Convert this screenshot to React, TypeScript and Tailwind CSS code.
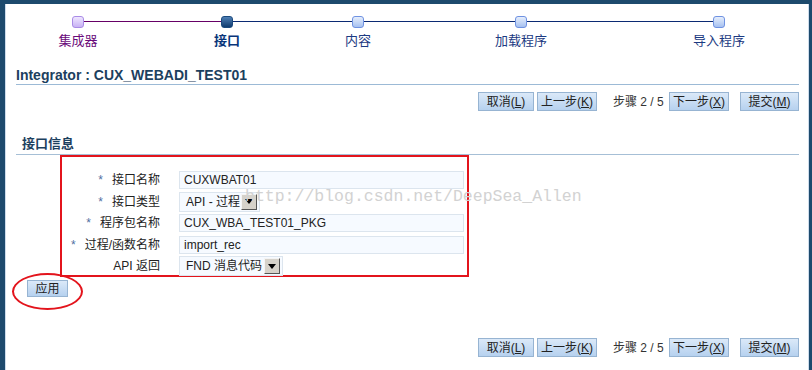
import React from 'react';

const font = { fontFamily: '"Liberation Sans", "Noto Sans CJK SC", Arial, sans-serif' };

const steps = [
  { label: '集成器', kind: 'done', left: 32 },
  { label: '接口', kind: 'current', left: 69 },
  { label: '内容', kind: 'todo', left: 51 },
  { label: '加载程序', kind: 'todo', left: 83 },
  { label: '导入程序', kind: 'todo', left: 118 },
];

function StepBox({ kind }: { kind: string }) {
  if (kind === 'done')
    return <div className="w-3 h-3 rounded-[3px] border border-[#a98be6] bg-gradient-to-b from-[#efe6ff] to-[#c8b2f4]" />;
  if (kind === 'current')
    return <div className="w-3 h-3 rounded-[3px] border border-[#1b4a7e] bg-gradient-to-b from-[#4f80b5] to-[#0f3c70]" />;
  return <div className="w-3 h-3 rounded-[3px] border border-[#6f92e2] bg-gradient-to-b from-[#e6eefc] to-[#a7c1f0]" />;
}

function Btn({ w, children }: { w: string; children: React.ReactNode }) {
  return (
    <button
      className={`${w} h-[19px] border border-[#97b4d2] bg-gradient-to-b from-[#dbe9f8] to-[#b6d1ef] text-[12px] leading-none text-[#222] flex items-center justify-center`}
    >
      {children}
    </button>
  );
}

function ButtonBar() {
  return (
    <div className="flex items-center justify-end">
      <Btn w="w-[56px]">取消(<u>L</u>)</Btn>
      <div className="w-[3px]" />
      <Btn w="w-[60px]">上一步(<u>K</u>)</Btn>
      <span className="ml-[16px] mr-[6px] w-[50px] text-[12px] text-[#333] whitespace-nowrap">步骤 2 / 5</span>
      <Btn w="w-[60px]">下一步(<u>X</u>)</Btn>
      <div className="w-[11px]" />
      <Btn w="w-[59px]">提交(<u>M</u>)</Btn>
    </div>
  );
}

function Arrow() {
  return (
    <div className="w-[16px] h-[16px] border border-t-[#f4f4f4] border-l-[#f4f4f4] border-r-[#555] border-b-[#555] bg-[#d6d2ca] flex items-center justify-center">
      <svg width="8" height="5" viewBox="0 0 8 5">
        <path d="M0 0 H8 L4 5 Z" fill="#000" />
      </svg>
    </div>
  );
}

function Label({ star, children }: { star?: boolean; children: React.ReactNode }) {
  return (
    <div className="flex justify-end items-center h-full text-[12px] text-[#222] whitespace-nowrap">
      {star && <span className="text-[#4f6f9f] mr-[9px]">*</span>}
      {children}
    </div>
  );
}

export default function App() {
  return (
    <div className="w-[812px] h-[370px] bg-[#1d4a6d] pt-1 pl-[5px] pr-[3px] overflow-hidden" style={font}>
      <div className="relative h-full bg-white border-l border-r border-[#cddcec]">
        {/* train */}
        <div className="relative h-[48px]">
          <div className="absolute top-[17px] left-[72px] w-[149px] h-px bg-[#660066]" />
          <div className="absolute top-[17px] left-[221px] w-[492px] h-px bg-[#0b2a73]" />
          <div className="relative flex pt-3">
            {steps.map((s) => (
              <div key={s.label} className="w-[80px] flex flex-col items-center" style={{ marginLeft: s.left }}>
                <StepBox kind={s.kind} />
                <span
                  className={`mt-[5px] text-[13px] leading-[16px] ${
                    s.kind === 'done' ? 'text-[#6a0a7a]' : s.kind === 'current' ? 'text-[#08357a] font-bold' : 'text-[#1c3a82]'
                  }`}
                >
                  {s.label}
                </span>
              </div>
            ))}
          </div>
        </div>

        <div className="pl-[10px] pr-[9px]">
          <div className="mt-[15px] border-b border-[#9cbad6] pb-[1px]">
            <h1 className="text-[14px] leading-[16px] font-bold text-[#1c405e]">Integrator : CUX_WEBADI_TEST01</h1>
          </div>
          <div className="mt-[7px]">
            <ButtonBar />
          </div>
          <div className="mt-[25px] border-b border-[#a6bfd6] pl-[6px] pb-[2px]">
            <h2 className="text-[13px] leading-[16px] font-bold text-[#1c405e]">接口信息</h2>
          </div>
        </div>

        <div className="ml-[54px] w-[409px] h-[122px] border-2 border-[#e3141c] pt-[14px] pr-[3px]">
          <div className="grid grid-cols-[98px_1fr] gap-x-[19px] auto-rows-[18px] gap-y-[3.5px]">
            <Label star>接口名称</Label>
            <div className="h-[18px] border border-[#dce5ee] bg-[#f6faff] text-[12px] text-[#222] px-[4px] flex items-center">CUXWBAT01</div>

            <Label star>接口类型</Label>
            <div className="w-[81px] h-[20px] -mt-[1px] border border-[#dce5ee] bg-[#f6faff] text-[12px] text-[#222] pl-[6px] pr-[2px] flex items-center justify-between">
              <span>API - 过程</span>
              <Arrow />
            </div>

            <Label star>程序包名称</Label>
            <div className="h-[18px] border border-[#dce5ee] bg-[#f6faff] text-[12px] text-[#222] px-[4px] flex items-center">CUX_WBA_TEST01_PKG</div>

            <Label star>过程/函数名称</Label>
            <div className="h-[18px] border border-[#dce5ee] bg-[#f6faff] text-[12px] text-[#222] px-[4px] flex items-center">import_rec</div>

            <Label>API 返回</Label>
            <div className="w-[104px] h-[20px] -mt-[1px] border border-[#dce5ee] bg-[#f6faff] text-[12px] text-[#222] pl-[6px] pr-[2px] flex items-center justify-between">
              <span>FND 消息代码</span>
              <Arrow />
            </div>
          </div>
        </div>

        <div className="ml-[21px] mt-[3px] flex">
          <button className="w-[41px] h-[17px] border border-[#97b4d2] bg-gradient-to-b from-[#dbe9f8] to-[#b6d1ef] text-[12px] leading-none text-[#222]">
            应用
          </button>
        </div>

        <div className="pl-[10px] pr-[9px] mt-[41px]">
          <ButtonBar />
        </div>

        {/* annotations and watermark */}
        <div className="absolute left-[6px] top-[269px] w-[71px] h-[37px] rounded-[50%] border-2 border-[#e3141c]" />
        <div
          className="absolute left-[239px] top-[181px] text-[16.5px] text-[#d2d2d2] whitespace-nowrap pointer-events-none"
          style={{ fontFamily: '"Liberation Mono", monospace' }}
        >
          http://blog.csdn.net/DeepSea_Allen
        </div>
      </div>
    </div>
  );
}
